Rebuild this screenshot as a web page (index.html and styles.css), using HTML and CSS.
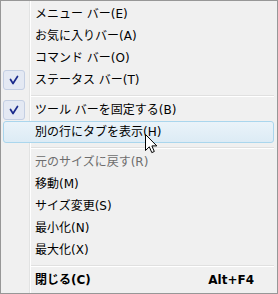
FILE: index.html
```html
<!DOCTYPE html>
<html lang="ja">
<head>
<meta charset="utf-8">
<link rel="stylesheet" href="styles.css">
</head>
<body>
<div class="menu">
  <div class="item"><span class="icon"></span><span class="label">メニュー バー(E)</span></div>
  <div class="item"><span class="icon"></span><span class="label">お気に入りバー(A)</span></div>
  <div class="item"><span class="icon"></span><span class="label">コマンド バー(O)</span></div>
  <div class="item"><span class="icon checked"><svg width="20" height="20" viewBox="0 0 20 20"><path d="M6.5 9.5 L9 13.5 L13.5 6.5" fill="none" stroke="#1b2b8c" stroke-width="1.7" stroke-linecap="round" stroke-linejoin="round"/></svg></span><span class="label">ステータス バー(T)</span></div>
  <div class="sep"></div>
  <div class="item"><span class="icon checked"><svg width="20" height="20" viewBox="0 0 20 20"><path d="M6.5 9.5 L9 13.5 L13.5 6.5" fill="none" stroke="#1b2b8c" stroke-width="1.7" stroke-linecap="round" stroke-linejoin="round"/></svg></span><span class="label">ツール バーを固定する(B)</span></div>
  <div class="item hover"><span class="icon"></span><span class="label">別の行にタブを表示(H)</span></div>
  <div class="sep"></div>
  <div class="item disabled"><span class="icon"></span><span class="label">元のサイズに戻す(R)</span></div>
  <div class="item"><span class="icon"></span><span class="label">移動(M)</span></div>
  <div class="item"><span class="icon"></span><span class="label">サイズ変更(S)</span></div>
  <div class="item"><span class="icon"></span><span class="label">最小化(N)</span></div>
  <div class="item"><span class="icon"></span><span class="label">最大化(X)</span></div>
  <div class="sep"></div>
  <div class="item bold"><span class="icon"></span><span class="label">閉じる(C)</span><span class="shortcut">Alt+F4</span></div>
</div>
<svg class="cursor" width="13" height="20" viewBox="0 0 13 20"><path d="M0.5 0.5 L0.5 16.5 L4.3 12.8 L6.8 18.6 L9.3 17.5 L6.9 11.9 L11.8 11.9 Z" fill="#fff" stroke="#000" stroke-width="1" stroke-linejoin="miter"/></svg>
</body>
</html>
```

FILE: styles.css
```css
html, body {
  margin: 0;
  padding: 0;
  background: #f0f0f0;
}
body {
  position: relative;
  width: 278px;
  height: 294px;
  font-family: "DejaVu Sans", "Noto Sans CJK JP", sans-serif;
  font-size: 12px;
  color: #000;
}
.menu {
  box-sizing: border-box;
  width: 278px;
  height: 294px;
  border: 1px solid #979797;
  padding: 2px;
  background:
    linear-gradient(to right, transparent 28px, #e2e3e3 28px, #e2e3e3 29px, #ffffff 29px, #ffffff 30px, transparent 30px),
    #f0f0f0;
  display: flex;
  flex-direction: column;
}
.item {
  box-sizing: border-box;
  height: 22px;
  display: flex;
  align-items: center;
  padding-right: 19px;
  border: 1px solid transparent;
  border-radius: 3px;
  margin-right: 1px;
}
.icon {
  box-sizing: border-box;
  width: 22px;
  height: 20px;
  margin-left: -1px;
  margin-right: 10px;
  flex: none;
  display: flex;
  align-items: center;
  justify-content: center;
}
.icon.checked {
  background: #e4e9f3;
  border: 1px solid #c4cfe3;
  border-radius: 3px;
}
.label {
  flex: 1;
  white-space: nowrap;
  line-height: 20px;
}
.shortcut {
  white-space: nowrap;
  line-height: 20px;
}
.item.hover {
  border-color: #aad6ed;
  background: linear-gradient(to bottom, #eaf3f9, #dcebf5);
}
.item.disabled {
  color: #6d6d6d;
}
.item.bold {
  font-weight: bold;
}
.sep {
  height: 0;
  margin: 4px 1px 2px 28px;
  border-top: 1px solid #e0e0e0;
  border-bottom: 1px solid #ffffff;
}
.cursor {
  position: absolute;
  left: 145px;
  top: 134px;
}
```
